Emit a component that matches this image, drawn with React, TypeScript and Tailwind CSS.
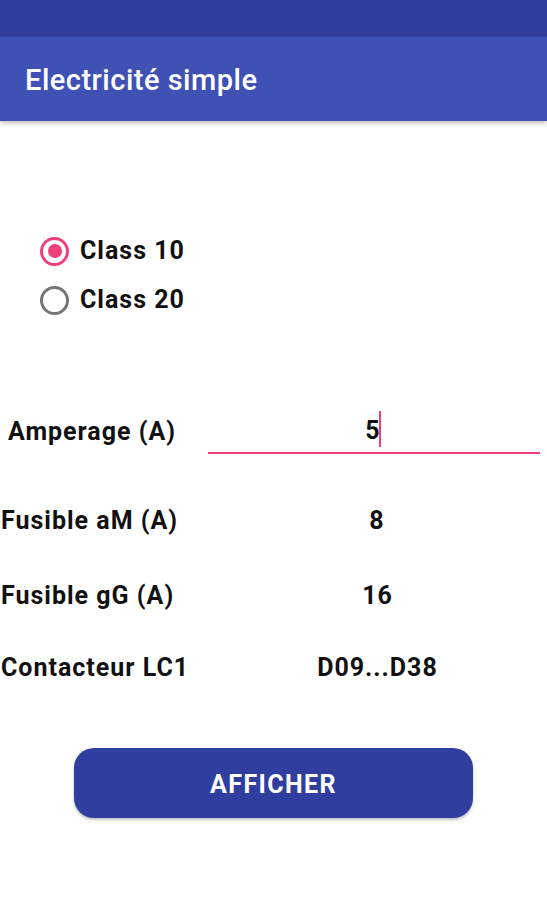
import React from "react";

export default function App() {
  const txt = "text-[25px] font-bold tracking-[1px] text-[#111]";
  return (
    <div className="w-[547px] h-[900px] bg-white overflow-hidden" style={{ fontFamily: "Roboto, 'Liberation Sans', sans-serif" }}>
      <div className="h-[37px] bg-[#303f9f]" />
      <div className="h-[84px] bg-[#3f51b5] flex items-center pl-[25px] pt-[3px] shadow-[0_2px_4px_rgba(0,0,0,0.25)] relative">
        <span className="text-white text-[29px] font-medium tracking-[0.5px] leading-none">Electricité simple</span>
      </div>

      <div className="pt-[106px] pl-[40px] flex flex-col">
        <div className="h-[48px] flex items-center">
          <div className="w-[29px] h-[29px] rounded-full border-[3px] border-[#f0407a] flex items-center justify-center">
            <div className="w-[14px] h-[14px] rounded-full bg-[#f0407a]" />
          </div>
          <span className={`ml-[11px] ${txt}`}>Class 10</span>
        </div>
        <div className="h-[48px] mt-[1px] flex items-center">
          <div className="w-[29px] h-[29px] rounded-full border-[3px] border-[#757575]" />
          <span className={`ml-[11px] ${txt}`}>Class 20</span>
        </div>
      </div>

      <div className="mt-[86px] flex items-end h-[44px]">
        <div className={`w-[208px] h-[44px] flex items-center pl-[8px] ${txt}`}>Amperage (A)</div>
        <div className={`w-[332px] h-[44px] border-b-2 border-[#f0407a] flex items-center justify-center ${txt}`}>
          <span className="relative mr-[2px]">
            5
            <span className="absolute right-0 top-[-1px] w-[2px] h-[36px] bg-[#f0407a]" />
          </span>
        </div>
      </div>

      <div className={`mt-[45px] flex h-[44px] items-center ${txt}`}>
        <div className="w-[208px] pl-[1px]">Fusible aM (A)</div>
        <div className="w-[332px] pl-[6px] text-center">8</div>
      </div>
      <div className={`mt-[31px] flex h-[44px] items-center ${txt}`}>
        <div className="w-[208px] pl-[1px]">Fusible gG (A)</div>
        <div className="w-[332px] pl-[7px] text-center">16</div>
      </div>
      <div className={`mt-[28px] flex h-[44px] items-center ${txt}`}>
        <div className="w-[208px] pl-[1px]">Contacteur LC1</div>
        <div className="w-[332px] pl-[7px] text-center">D09...D38</div>
      </div>

      <div className="mt-[58px] flex justify-start pl-[74px]">
        <button className="w-[399px] h-[70px] pt-[3px] rounded-[20px] bg-[#303f9f] text-white text-[25px] font-bold tracking-[1.4px] shadow-[0_2px_3px_rgba(0,0,0,0.25)]">
          AFFICHER
        </button>
      </div>
    </div>
  );
}
